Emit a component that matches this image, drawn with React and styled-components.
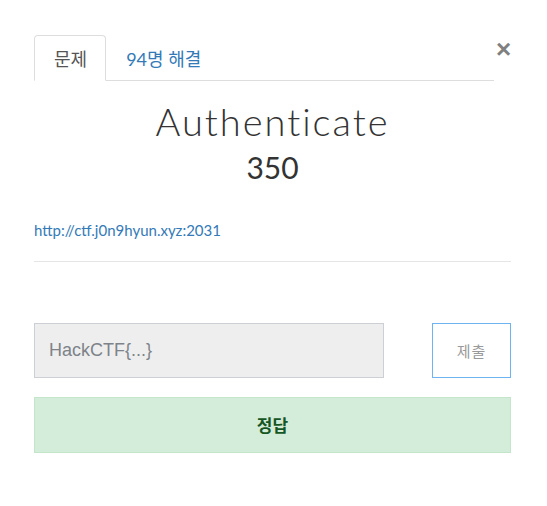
import React from 'react'
import styled, { createGlobalStyle } from 'styled-components'

const Global = createGlobalStyle`
  body {
    margin: 0;
    background: #fff;
    font-family: Lato, "Noto Sans CJK KR", sans-serif;
  }
`

const Modal = styled.div`
  width: 547px;
  box-sizing: border-box;
  padding: 35px 36px 40px 34px;
`

const Header = styled.div`
  display: flex;
  align-items: flex-start;
`

const Tabs = styled.ul`
  flex: 1;
  display: flex;
  margin: 0;
  padding: 0;
  list-style: none;
  border-bottom: 1px solid #ddd;
`

const Tab = styled.li`
  margin-bottom: -1px;
  padding: 0 18px 0 19px;
  height: 44px;
  display: flex;
  align-items: center;
  font-size: 18px;
  color: ${p => (p.active ? '#555' : '#337ab7')};
  background: ${p => (p.active ? '#fff' : 'transparent')};
  border: 1px solid ${p => (p.active ? '#ddd' : 'transparent')};
  border-bottom-color: ${p => (p.active ? '#fff' : 'transparent')};
  border-radius: 4px 4px 0 0;
`

const Close = styled.button`
  margin: 1px 0 0 2px;
  padding: 0;
  width: 15px;
  border: 0;
  background: none;
  font-family: "Liberation Sans", sans-serif;
  font-size: 26px;
  font-weight: 700;
  line-height: 1;
  color: #808080;
`

const Title = styled.h1`
  margin: 20px 0 0;
  text-align: center;
  font-family: Lato, sans-serif;
  font-weight: 300;
  font-size: 38px;
  letter-spacing: 2px;
  line-height: 1.1;
  color: #333;
`

const Points = styled.h2`
  margin: 8px 0 0;
  text-align: center;
  font-family: Lato, sans-serif;
  font-weight: 400;
  font-size: 30px;
  line-height: 1.1;
  color: #333;
`

const Link = styled.a`
  display: block;
  margin-top: 37px;
  font-size: 15px;
  color: #337ab7;
  text-decoration: none;
`

const Rule = styled.hr`
  margin: 22px 0 61px;
  border: 0;
  border-top: 1px solid #e5e5e5;
`

const Form = styled.form`
  display: flex;
  justify-content: space-between;
  margin: 0;
`

const Input = styled.input`
  width: 350px;
  height: 55px;
  box-sizing: border-box;
  padding: 0 14px;
  background: #eee;
  border: 1px solid #ccd0d5;
  font-family: "Liberation Sans", sans-serif;
  font-size: 18px;
  color: #555;
  outline: none;
  &::placeholder {
    color: #7d8389;
  }
`

const Submit = styled.button`
  width: 79px;
  height: 55px;
  box-sizing: border-box;
  background: #fff;
  border: 1px solid #6fb4f2;
  font-family: "Noto Sans CJK KR", sans-serif;
  font-size: 15px;
  color: #999;
  letter-spacing: 1px;
`

const Alert = styled.div`
  margin-top: 19px;
  height: 56px;
  box-sizing: border-box;
  display: flex;
  align-items: center;
  justify-content: center;
  background: #d4ecda;
  border: 1px solid #c3e6cb;
  font-family: "Noto Sans CJK KR", sans-serif;
  font-weight: 700;
  font-size: 17px;
  color: #155724;
`

export default function App() {
  return (
    <>
      <Global />
      <Modal>
        <Header>
          <Tabs>
            <Tab active>문제</Tab>
            <Tab>94명 해결</Tab>
          </Tabs>
          <Close aria-label="close">×</Close>
        </Header>
        <Title>Authenticate</Title>
        <Points>350</Points>
        <Link href="#">http://ctf.j0n9hyun.xyz:2031</Link>
        <Rule />
        <Form onSubmit={e => e.preventDefault()}>
          <Input placeholder="HackCTF{...}" />
          <Submit type="submit">제출</Submit>
        </Form>
        <Alert>정답</Alert>
      </Modal>
    </>
  )
}
